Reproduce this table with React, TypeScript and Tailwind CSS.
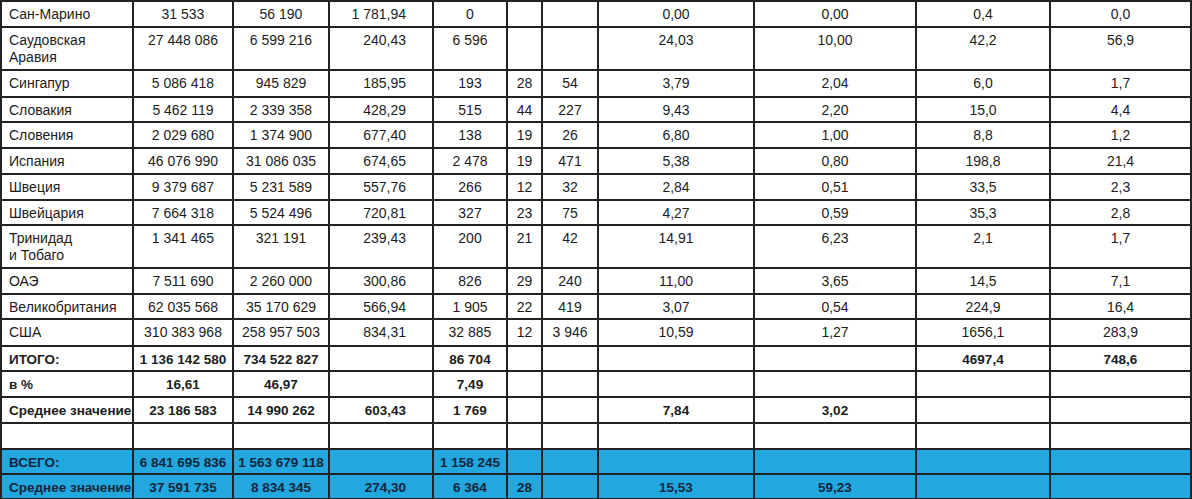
import React from "react";

type Row = { cells: string[]; h: string; kind?: "bold" | "blue" };

const colWidths = [
  "w-[132px]",
  "w-[100px]",
  "w-[96px]",
  "w-[104px]",
  "w-[74px]",
  "w-[35px]",
  "w-[56px]",
  "w-[156px]",
  "w-[162px]",
  "w-[134px]",
  "w-[141px]",
];

const rows: Row[] = [
  { h: "h-[26px]", cells: ["Сан-Марино", "31 533", "56 190", "1 781,94", "0", "", "", "0,00", "0,00", "0,4", "0,0"] },
  { h: "h-[43px]", cells: ["Саудовская\nАравия", "27 448 086", "6 599 216", "240,43", "6 596", "", "", "24,03", "10,00", "42,2", "56,9"] },
  { h: "h-[27px]", cells: ["Сингапур", "5 086 418", "945 829", "185,95", "193", "28", "54", "3,79", "2,04", "6,0", "1,7"] },
  { h: "h-[25px]", cells: ["Словакия", "5 462 119", "2 339 358", "428,29", "515", "44", "227", "9,43", "2,20", "15,0", "4,4"] },
  { h: "h-[26px]", cells: ["Словения", "2 029 680", "1 374 900", "677,40", "138", "19", "26", "6,80", "1,00", "8,8", "1,2"] },
  { h: "h-[26px]", cells: ["Испания", "46 076 990", "31 086 035", "674,65", "2 478", "19", "471", "5,38", "0,80", "198,8", "21,4"] },
  { h: "h-[26px]", cells: ["Швеция", "9 379 687", "5 231 589", "557,76", "266", "12", "32", "2,84", "0,51", "33,5", "2,3"] },
  { h: "h-[25px]", cells: ["Швейцария", "7 664 318", "5 524 496", "720,81", "327", "23", "75", "4,27", "0,59", "35,3", "2,8"] },
  { h: "h-[43px]", cells: ["Тринидад\nи Тобаго", "1 341 465", "321 191", "239,43", "200", "21", "42", "14,91", "6,23", "2,1", "1,7"] },
  { h: "h-[26px]", cells: ["ОАЭ", "7 511 690", "2 260 000", "300,86", "826", "29", "240", "11,00", "3,65", "14,5", "7,1"] },
  { h: "h-[25px]", cells: ["Великобритания", "62 035 568", "35 170 629", "566,94", "1 905", "22", "419", "3,07", "0,54", "224,9", "16,4"] },
  { h: "h-[27px]", cells: ["США", "310 383 968", "258 957 503", "834,31", "32 885", "12", "3 946", "10,59", "1,27", "1656,1", "283,9"] },
  { h: "h-[25px]", kind: "bold", cells: ["ИТОГО:", "1 136 142 580", "734 522 827", "", "86 704", "", "", "", "", "4697,4", "748,6"] },
  { h: "h-[26px]", kind: "bold", cells: ["в %", "16,61", "46,97", "", "7,49", "", "", "", "", "", ""] },
  { h: "h-[26px]", kind: "bold", cells: ["Среднее значение", "23 186 583", "14 990 262", "603,43", "1 769", "", "", "7,84", "3,02", "", ""] },
  { h: "h-[26px]", kind: "bold", cells: ["", "", "", "", "", "", "", "", "", "", ""] },
  { h: "h-[25px]", kind: "blue", cells: ["ВСЕГО:", "6 841 695 836", "1 563 679 118", "", "1 158 245", "", "", "", "", "", ""] },
  { h: "h-[25px]", kind: "blue", cells: ["Среднее значение", "37 591 735", "8 834 345", "274,30", "6 364", "28", "", "15,53", "59,23", "", ""] },
];

function Cell({ text, col, kind }: { text: string; col: number; kind?: Row["kind"] }) {
  const align =
    col === 0 ? "text-left pl-[7px]" : col === 3 ? "text-right pr-[26px]" : "text-center px-0";
  const weight = kind ? "font-bold text-[13.5px]" : "text-[14px]";
  return (
    <td
      className={`border-2 border-[#222222] align-top pt-[4px] leading-[17px] whitespace-pre ${align} ${weight}`}
    >
      {text}
    </td>
  );
}

export default function App() {
  return (
    <div className="w-[1192px] h-[499px] bg-white overflow-hidden">
      <table className="table-fixed border-collapse w-[1191px] text-[#1c1c1c] font-['Liberation_Sans',Arial,sans-serif]">
        <colgroup>
          {colWidths.map((w, i) => (
            <col key={i} className={w} />
          ))}
        </colgroup>
        <tbody>
          {rows.map((r, i) => (
            <tr
              key={i}
              className={`${r.h} ${r.kind === "blue" ? "bg-[#22a7df] text-[#13253a]" : ""}`}
            >
              {r.cells.map((c, j) => (
                <Cell key={j} text={c} col={j} kind={r.kind} />
              ))}
            </tr>
          ))}
        </tbody>
      </table>
    </div>
  );
}
